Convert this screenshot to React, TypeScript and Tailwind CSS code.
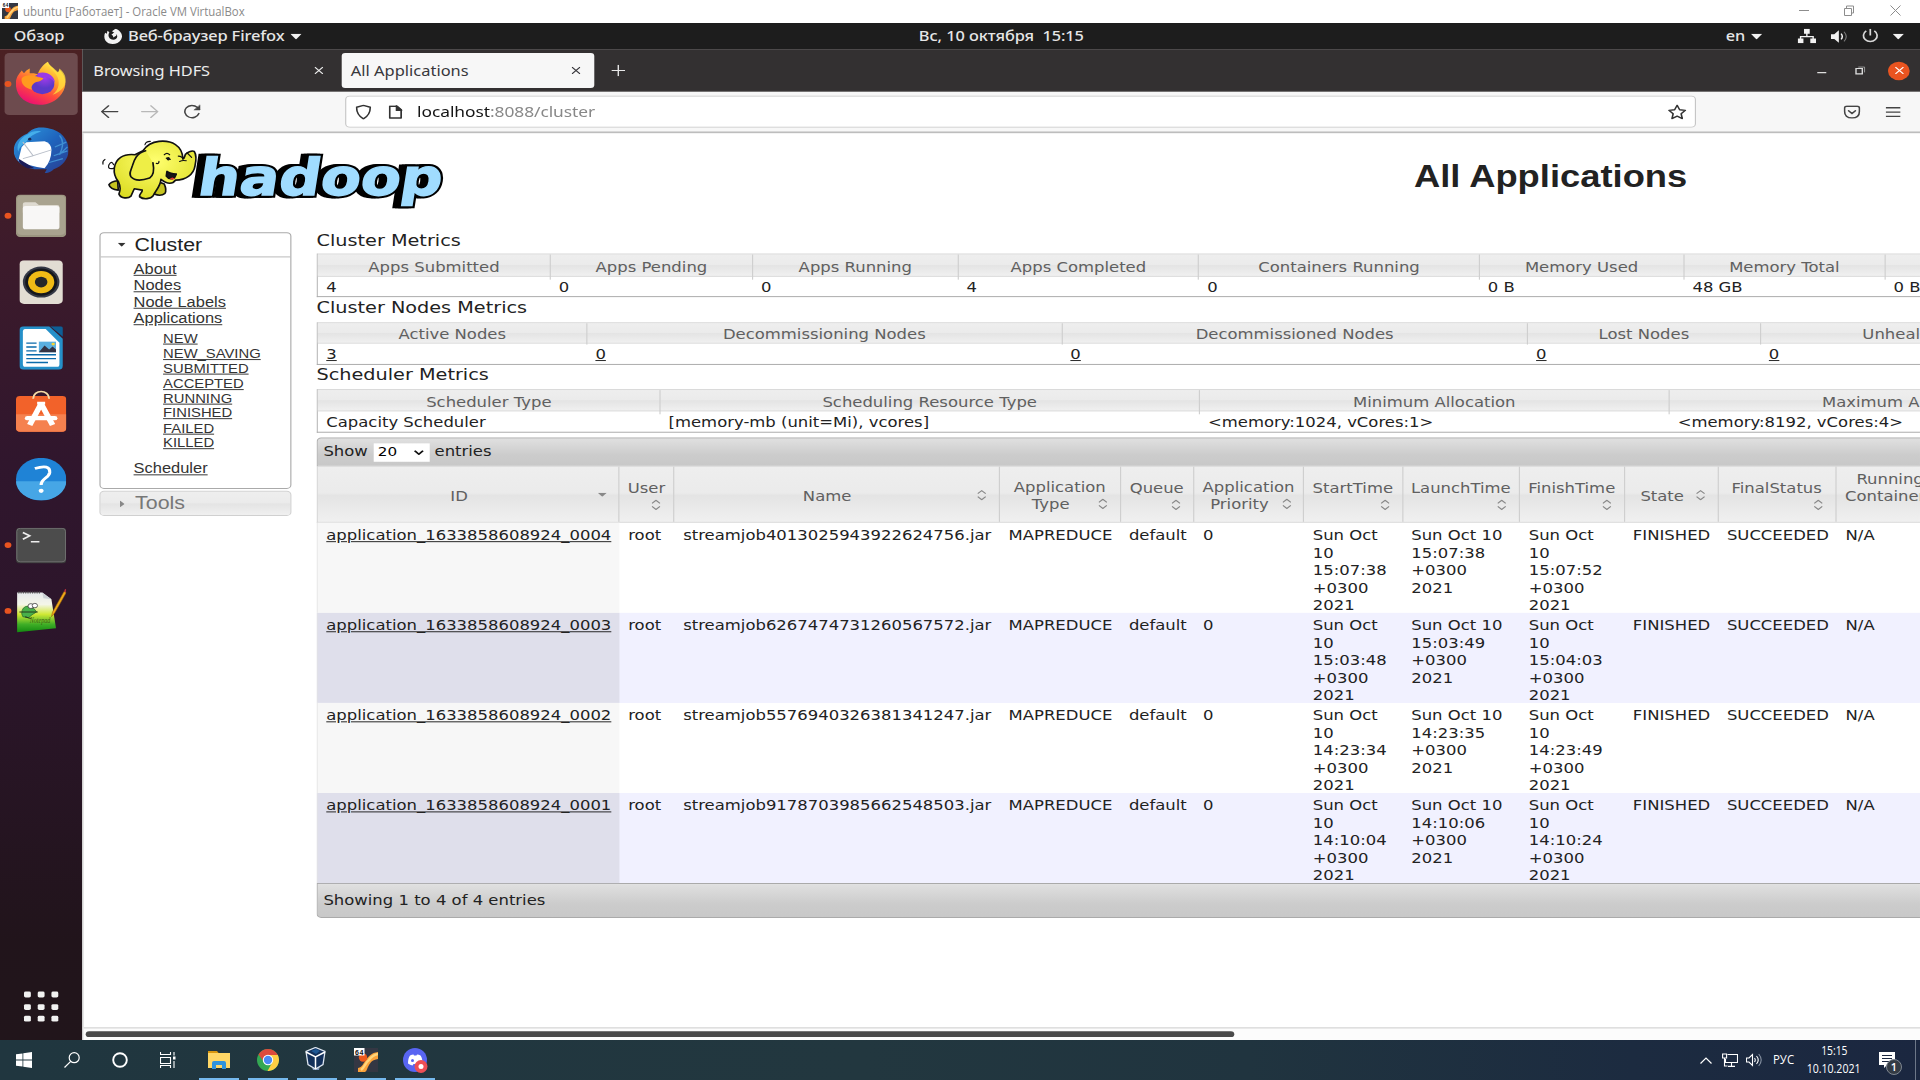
import React from "react";
import type { ReactNode } from "react";

const UI = "font-['Noto_Sans',sans-serif]";
const HEAD_BG = "bg-[linear-gradient(to_bottom,#eeeeee_0%,#ebebeb_48%,#e4e4e4_52%,#f0f0f0_100%)]";
const BAR_BG = "bg-[linear-gradient(to_bottom,#e0e0e0_0%,#cccccc_60%,#c8c8c8_100%)]";

/* ---------- host window ---------- */

function VBoxLogo({ className }: { className: string }) {
  return (
    <svg viewBox="0 0 24 24" className={className} preserveAspectRatio="none">
      <rect width="24" height="24" fill="#343743" />
      <path d="M4 24v-4c5-1 5-5 8-8 3-4 5-7 12-8v7c-6 1-7 3-9 6-2 3-2 6-4 7z" fill="#f9a13a" />
      <path d="M7 22c4-3 4-7 8-10 2-3 5-5 9-6" fill="none" stroke="#ffd57a" strokeWidth="2.500" />
      <circle cx="9" cy="9.500" r="4.200" fill="#ee5a1c" />
      <rect width="10.500" height="7.500" fill="#fff" />
      <text x="1" y="6.500" fontSize="7" fontWeight="700" fontFamily="Liberation Sans" fill="#111" textLength="8.500">64</text>
    </svg>
  );
}

function HostTitleBar() {
  return (
    <div className="flex h-[23px] items-start bg-white">
      <VBoxLogo className="ml-[2px] mt-[3px] h-4 w-4" />
      <span className="ml-[5px] mt-[3px] origin-left scale-x-[0.95] whitespace-nowrap font-['Open_Sans',sans-serif] text-[12px] leading-[18px] text-[#8a8a8a]">
        ubuntu [Работает] - Oracle VM VirtualBox
      </span>
      <svg className="ml-auto mr-[19px] mt-[5px] h-[11px] w-[102px]" viewBox="0 0 102 11" fill="none" stroke="#8d8d8d" strokeWidth="1">
        <path d="M0 5.500h10M45.500 3.500h7v7h-7zM47.500 3.500v-2.500h7v7h-2M91.500 .5l10 10M101.500 .5l-10 10" />
      </svg>
    </div>
  );
}

/* ---------- guest desktop ---------- */

function Caret() {
  return (
    <svg className="h-[6px] w-[10px]" viewBox="0 0 10 6"><path d="M0 0h10L5 6z" fill="#f2f2f2" /></svg>
  );
}

function TopBar() {
  return (
    <div className={`flex h-[27px] items-center bg-[#1d1d1d] text-[14.300px] font-medium leading-[27px] text-[#e6e6e6] ${UI}`}>
      <div className="ml-[12px] w-[79px] whitespace-nowrap text-[14.400px]">Обзор</div>
      <svg className="h-4 w-4" viewBox="0 0 16 16" fill="#f2f2f2">
        <path d="M1 4l1.500 1L3 2l1.700 1.500C3 7 4 11 8 11.300c3 0 4.500-3 3-5.500L8 7.500 6.500 6 9 4l-2-1.500L10 0c5 2 7 7 5 11-3 6-11 6-13.800 1C0 9.500 0 6.500 1 4z" />
        <path d="M8 4v5l3-2z" />
      </svg>
      <div className="ml-[5px] w-[142px] whitespace-nowrap text-[14.400px] tracking-[-0.100px]">Веб-браузер Firefox</div>
      <Caret />
      <div className="ml-[540px] w-[706px] whitespace-nowrap tracking-[-0.060px]">Вс, 10 октября&nbsp; 15:15</div>
      <div className="w-[22px]">en</div>
      <Caret />
      <svg className="ml-[31px] h-[15px] w-4" viewBox="0 0 16 15" fill="#f2f2f2">
        <path d="M5.500 0h5v5h-5zM0 10h5v5H0zM11 10h5v5h-5z" />
        <path d="M8 4v4M2.500 11V8h11v3" fill="none" stroke="#f2f2f2" strokeWidth="1.200" />
      </svg>
      <svg className="ml-[13px] h-[14px] w-[15px]" viewBox="0 0 15 14" fill="none" stroke="#f2f2f2">
        <path d="M0 4.500h3L7 .5v13L3 9.500H0z" fill="#f2f2f2" stroke="none" />
        <path d="M9 4q2 3 0 6" strokeWidth="1.300" /><path d="M11.500 2q4 5 0 10" stroke="#777" />
      </svg>
      <svg className="ml-[12px] h-[15px] w-[15px]" viewBox="0 0 15 15" fill="none" stroke="#d8d8d8" strokeWidth="1.500">
        <path d="M7.500 0v7M4 2.200a6 6 0 1 0 7 0" />
      </svg>
      <div className="ml-[12px]"><Caret /></div>
    </div>
  );
}

function FirefoxIcon() {
  return (
    <svg viewBox="0 0 48 48" className="h-12 w-12">
      <defs>
        <linearGradient id="fx" x1=".8" y1="0" x2=".25" y2="1"><stop offset="0" stopColor="#fff44f" /><stop offset=".35" stopColor="#ffa42c" /><stop offset=".65" stopColor="#ff4a3c" /><stop offset="1" stopColor="#e80a78" /></linearGradient>
        <radialGradient id="fp" cx=".6" cy=".2"><stop offset="0" stopColor="#a23bea" /><stop offset="1" stopColor="#5b39c9" /></radialGradient>
      </defs>
      <path d="M2 22c0-5 3-9 5-12l2 3c1-2 3-4 5-5v5c2 0 5 0 7 1 2-7 6-11 9-13 1 4 5 7 8 11 2-1 2-2 2-3 6 7 7 17 2 25-5 9-15 13-24 11C8 43 1 34 2 22z" fill="url(#fx)" />
      <circle cx="25" cy="24" r="10.500" fill="url(#fp)" />
      <path d="M7 18c4-5 10-3 16-1l3 1c-2 4-6 3-8 5-2 2-3 4-2 7-6-2-10-6-9-12z" fill="#ff9a1f" />
      <path d="M29 1c1 6 6 8 8 13 4 7 3 16-3 21 8-3 13-10 11-19-1-4-3-6-5-8l-1 4C36 8 31 5 29 1z" fill="#ffe03f" opacity=".75" />
      <path d="M21 13c7-3 15 2 15 10-2-5-8-8-15-6z" fill="#9b3ae6" />
    </svg>
  );
}

function ThunderbirdIcon() {
  return (
    <svg viewBox="0 0 48 48" className="h-12 w-12">
      <defs><linearGradient id="tb" x1="0" y1="0" x2="1" y2="1"><stop offset="0" stopColor="#2f9be0" /><stop offset=".5" stopColor="#1f64bd" /><stop offset="1" stopColor="#2a3b8f" /></linearGradient></defs>
      <path d="M12 7C15 3 20 0 26 1c3 0 4 1 5 1 10 2 17 11 17 22 0 10-6 17-13 20-3 4-8 4-8 4l2-4H18C7 42 0 34 0 25 0 17 4 11 12 7z" fill="url(#tb)" />
      <path d="M12 8c4-3 7-4 12-3-6 2-10 5-12 9-2 4-7 5-8 12-2-7 1-14 8-18z" fill="#45aeea" />
      <path d="M40 9c4 5 3 13 0 20l7-8M36 21l10-5M35 30l12-5M31 37l12-4" stroke="#3f8fd2" strokeWidth="1.200" fill="none" />
      <path d="M11 16l16-1q6 2 6 9 0 11-6 19Q13 41 4 35l3-14z" fill="#fff" />
      <path d="M8 16l9 14 16-6M17 30l-9 3" fill="none" stroke="#b9bfc9" strokeWidth="1" />
      <path d="M4 33l14 10h-6q-7-3-8-10z" fill="#1c1b58" /><circle cx="14" cy="13" r="1.400" fill="#1c2855" />
    </svg>
  );
}

function FilesIcon() {
  return (
    <svg viewBox="0 0 44 44" className="h-11 w-11">
      <rect width="44" height="44" rx="4" fill="#9b9580" /><rect x="1" y="1" width="42" height="41" rx="4" fill="#a9a38f" />
      <path d="M6 10q0-2 2-2h9l3 3h16q2 0 2 2v6H6z" fill="#dedad0" />
      <rect x="6" y="12" width="32" height="24" rx="2.500" fill="#f8f7f6" />
    </svg>
  );
}

function RhythmboxIcon() {
  return (
    <svg viewBox="0 0 38 45" className="h-[45px] w-[38px]">
      <rect width="38" height="45" rx="4" fill="#e2ddd3" /><circle cx="19" cy="22.500" r="16" fill="#343845" />
      <circle cx="19" cy="22.500" r="14" fill="#15171c" /><circle cx="19" cy="22.500" r="11.500" fill="#f0bb16" />
      <circle cx="19" cy="22.500" r="5.500" fill="#252729" />
    </svg>
  );
}

function WriterIcon() {
  return (
    <svg viewBox="0 0 38 45" className="h-[45px] w-[38px]">
      <path d="M4 0h22l12 13v28q0 4-4 4H4q-4 0-4-4V4q0-4 4-4z" fill="#2590c9" /><path d="M27 0h9q2 0 2 2v9z" fill="#0d5f96" />
      <path d="M5 3h18L35 17v22q0 3-2 3H5q-2 0-2-3V6q0-3 2-3z" fill="#fff" />
      <path d="M6 17.500h9M6 21.500h9M6 25.500h9M6 29.500h26M6 33.500h26M6 37.500h19" stroke="#0b6bab" strokeWidth="1.500" />
      <rect x="17" y="16" width="15" height="11" fill="#5aafe0" /><path d="M17 27l5-7 4 4 3-3 3 3v3z" fill="#334" /><circle cx="29.500" cy="18.500" r="1.500" fill="#f8d330" />
    </svg>
  );
}

function SoftwareIcon() {
  return (
    <svg viewBox="0 0 44 44" className="-mt-[4px] h-11 w-11">
      <rect y="6" width="44" height="37" rx="3.500" fill="#f2622a" /><path d="M0 25h44v14q0 4-4 4H4q-4 0-4-4z" fill="#f5814f" />
      <path d="M15 9C15-1 29-1 29 9" fill="none" stroke="#f6dba6" strokeWidth="1.700" />
      <path d="M22 14L12 36M22 14l10 22" stroke="#fff" strokeWidth="5" fill="none" /><path d="M18.500 12h7v3h-7z" fill="#fff" /><path d="M10 29h24" stroke="#fff" strokeWidth="4.500" strokeLinecap="round" />
    </svg>
  );
}

function HelpIcon() {
  return (
    <svg viewBox="0 0 44 44" className="h-11 w-11">
      <circle cx="22" cy="22" r="22" fill="#1f83d6" /><path d="M0 24a22 20 0 0 0 44 0z" fill="#46a6e6" />
      <path d="M16.500 11Q30 6 29.500 15c-.5 6-7.500 6-7.500 13" fill="none" stroke="#fff" strokeWidth="2.800" /><circle cx="22" cy="34" r="2.200" fill="#fff" />
    </svg>
  );
}

function TerminalIcon() {
  return (
    <svg viewBox="0 0 44 37" className="h-[37px] w-11">
      <rect width="44" height="37" rx="3.500" fill="#3a3a3a" /><rect x=".7" y=".7" width="42.600" height="34.600" rx="3" fill="#4c4c4c" stroke="#777" strokeWidth=".8" />
      <path d="M6 5l6 3.500L6 12M13 14.500h7.500" fill="none" stroke="#eee" strokeWidth="1.600" />
    </svg>
  );
}

function NotepadqqIcon() {
  return (
    <svg viewBox="0 0 44 46" className="h-[46px] w-11">
      <defs><linearGradient id="np" x1="0" y1="0" x2="0" y2="1"><stop offset="0" stopColor="#e6e9ec" /><stop offset=".3" stopColor="#f4f6e8" /><stop offset=".55" stopColor="#cfe834" /><stop offset=".8" stopColor="#3fae27" /><stop offset="1" stopColor="#128a10" /></linearGradient></defs>
      <path d="M1 4h22l8 7 4 30L1 45z" fill="url(#np)" /><path d="M2 4h20" stroke="#555" strokeDasharray="1 1" strokeWidth="2" />
      <path d="M23 4l1 6 7 1z" fill="#cbd0d4" />
      <path d="M5 26q0-8 6-8l5 3 2 3-4 3-3 3-5-1z" fill="#48b04a" stroke="#256b27" strokeWidth=".7" /><circle cx="13" cy="18" r="2.500" fill="#fff" stroke="#333" strokeWidth=".7" /><circle cx="16.500" cy="17.500" r="2.300" fill="#fff" stroke="#333" strokeWidth=".7" />
      <path d="M3 24h16M8 29l5 2" stroke="#263a1c" strokeWidth="1" />
      <text x="12" y="35" fontSize="9" fontStyle="italic" fontFamily="Liberation Serif" fill="#3c6212" textLength="18" lengthAdjust="spacingAndGlyphs">Notepad</text>
      <path d="M31 29l1-5L42 3l2 1-10 21z" fill="#f0a818" stroke="#8b5a10" strokeWidth=".5" /><path d="M42 3l1-3 1 1-.5 3z" fill="#b3303c" />
    </svg>
  );
}

const DOCK: { icon: ReactNode; running?: boolean; active?: boolean }[] = [
  { icon: <FirefoxIcon />, running: true, active: true },
  { icon: <ThunderbirdIcon /> },
  { icon: <FilesIcon />, running: true },
  { icon: <RhythmboxIcon /> },
  { icon: <WriterIcon /> },
  { icon: <SoftwareIcon /> },
  { icon: <HelpIcon /> },
  { icon: <TerminalIcon />, running: true },
  { icon: <NotepadqqIcon />, running: true },
];

function Dock() {
  return (
    <div className="flex w-[72px] shrink-0 flex-col bg-[linear-gradient(to_bottom,#4b2123_0%,#3d1b2b_20%,#30162d_42%,#2b152a_62%,#21141b_90%,#21151b_100%)] pt-[2px]">
      {DOCK.map((d, i) => (
        <div key={i} className="flex h-[68px] items-center">
          <div className={`ml-[4px] flex h-16 w-16 items-center rounded ${d.active ? "bg-[#6d4b4e]" : ""}`}>
            <div className={`h-[6px] w-[6px] rounded-full ${d.running ? "bg-[#e95420]" : ""}`} />
            <div className="flex w-[52px] items-center justify-center">{d.icon}</div>
          </div>
        </div>
      ))}
      <div className="mb-[19px] ml-[20.500px] mt-auto grid w-[31px] grid-cols-3 gap-x-[6px] gap-y-[6.500px]">
        {Array.from({ length: 9 }, (_, i) => <div key={i} className="h-[6px] w-[6px] rounded-[1.500px] bg-[#f2f2f2]" />)}
      </div>
    </div>
  );
}

/* ---------- browser chrome ---------- */

function Cross({ className }: { className: string }) {
  return <svg viewBox="0 0 8 8" className={className} fill="none" stroke="currentColor" strokeWidth="1.100"><path d="M.5 .5l7 7M7.500 .5l-7 7" /></svg>;
}

function TabStrip() {
  return (
    <div className={`flex h-11 items-center border-b border-[#4a4848] bg-[#333031] text-[14.300px] text-[#ececec] ${UI}`}>
      <div className="ml-[9.700px] w-[193px] whitespace-nowrap pt-[2px] tracking-[-0.050px]">Browsing HDFS</div>
      <Cross className="h-2 w-2" />
      <div className="ml-[16.300px] flex h-9 w-[221px] items-center rounded-[3px] bg-[#f7f7f7] text-[#38373c]">
        <div className="ml-[8px] w-[193px] whitespace-nowrap pt-[2px] text-[14.400px]">All Applications</div>
        <Cross className="h-2 w-2" />
      </div>
      <svg className="ml-[15.500px] mt-px h-3 w-3" viewBox="0 0 12 12" stroke="#e8e8e8" strokeWidth="1.200"><path d="M6 0v12M0 6h12" /></svg>
      <svg className="ml-auto mt-px h-3 w-[43px]" viewBox="0 0 43 12" fill="none" stroke="#dedede" strokeWidth="1.200">
        <path d="M0 8.200h8M34 4h5.500v5.500H34z" /><path d="M36 2.500h5.500V8" stroke="#aaa" strokeWidth=".8" />
      </svg>
      <div className="ml-[19.500px] mr-[9px] mt-px flex h-[19px] w-[19px] items-center justify-center rounded-full bg-[#e95420] text-white">
        <Cross className="h-2 w-2" />
      </div>
    </div>
  );
}

function Toolbar() {
  return (
    <div className={`flex h-[43px] items-center border-b-2 border-[#bdbdbd] bg-[#f7f7f7] ${UI}`}>
      <svg className="ml-[15.700px] h-[15px] w-[88px]" viewBox="0 0 88 15" fill="none" stroke="#444" strokeWidth="1.300" strokeLinecap="round" strokeLinejoin="round">
        <path d="M1 7.500h14M7 1.500l-6 6 6 6" /><path d="M36 7.500h14M44 1.500l6 6-6 6" stroke="#b8b8b8" />
        <path d="M86 9.500a6.300 6.300 0 1 1-1.500-6.500l2 2" strokeWidth="1.400" /><path d="M87 .8v5h-5z" fill="#444" strokeWidth=".5" />
      </svg>
      <div className="ml-[126.800px] flex h-[33px] w-[1182px] items-center rounded border border-[#c6c6c6] bg-white">
        <svg className="ml-[8px] h-4 w-[14px]" viewBox="0 0 14 16" fill="none" stroke="#333" strokeWidth="1.400"><path d="M7 1l6 2q0 8-6 12-6-4-6-12z" strokeLinejoin="round" /></svg>
        <svg className="ml-[15px] h-[14px] w-[12px]" viewBox="0 0 12 14" fill="none" stroke="#333" strokeWidth="1.500"><path d="M1 1h6l4 4v8H1z" strokeLinejoin="round" /><path d="M7 .5V5h4.500z" fill="#333" /></svg>
        <div className="ml-[12.500px] whitespace-nowrap text-[15.200px] tracking-[-0.050px] text-[#888]"><span className="text-[#151515]">localhost</span>:8088/cluster</div>
        <svg className="ml-auto mr-[7px] h-4 w-[17px]" viewBox="0 0 17 16" fill="none" stroke="#333" strokeWidth="1.400" strokeLinejoin="round"><path d="M8.500 1l2.200 4.600 5 .6-3.700 3.500 1 5-4.500-2.500L4 14.700l1-5L1.300 6.200l5-.6z" /></svg>
      </div>
      <svg className="ml-auto h-[14px] w-[15px]" viewBox="0 0 15 14" fill="none" stroke="#444" strokeWidth="1.400" strokeLinecap="round"><path d="M1 3q0-2 2-2h9q2 0 2 2v3q0 7-6.500 7T1 6z" /><path d="M4.500 5.500l3 3 3-3" /></svg>
      <svg className="ml-[22px] mr-[17.500px] h-[12px] w-[13px]" viewBox="0 0 13 12" stroke="#444" strokeWidth="1.300"><path d="M0 1.500h13M0 6h13M0 10.500h13" /></svg>
    </div>
  );
}

/* ---------- page ---------- */

function HadoopLogo() {
  return (
    <svg viewBox="0 0 1080 240" preserveAspectRatio="none" className="h-[82.600px] w-[315px] shrink-0">
      <defs><radialGradient id="el" cx=".5" cy=".35" r=".7"><stop offset="0" stopColor="#ffff70" /><stop offset="1" stopColor="#dcdc22" /></radialGradient></defs>
      <g transform="translate(0 184) skewX(-9)" fontFamily="DejaVu Sans, sans-serif" fontWeight="700" fontSize="152" strokeLinejoin="miter">
        <text x="300" y="0" textLength="732" lengthAdjust="spacingAndGlyphs" fill="#000" stroke="#000" strokeWidth="16">hadoop</text>
        <text x="308" y="0" textLength="732" lengthAdjust="spacingAndGlyphs" fill="#000" stroke="#000" strokeWidth="16">hadoop</text>
        <text x="318" y="0" textLength="732" lengthAdjust="spacingAndGlyphs" fill="#000" stroke="#000" strokeWidth="16">hadoop</text>
        <text x="318" y="0" textLength="732" lengthAdjust="spacingAndGlyphs" fill="#a0dcff" stroke="#a0dcff" strokeWidth="4">hadoop</text>
      </g>
      <g stroke="#111" strokeWidth="5" strokeLinejoin="round" strokeLinecap="round">
        <path d="M72 104q-22 6-16-10 8-14 14 0M38 92q-2-10 6-14M164 34q2-10 16-10" fill="none" strokeWidth="3.500" />
        <path d="M82 142q-20 2-26 12 4 14 28 16zM196 142l26 10q8 18 2 28-12 10-32 2z" fill="#c6c420" />
        <path d="M134 64C98 60 76 76 72 104c-2 18 2 28 12 40 8 18 6 26 2 38 6 14 28 14 36 6l10-22 24 4c0 10-10 10-8 20 12 10 34 6 40-2 10-20 22-28 24-50 20 16 36 14 44 2 32 0 54-18 58-42 4-18 6-32-2-44-8-4-18 2-26 8-4 6-2 14-8 14C276 36 244 20 206 24c-20 2-36 10-48 28z" fill="url(#el)" />
        <path d="M166 52c-28 8-34 26-40 46-6 18-10 22-4 32 12 14 38 10 56 4 12-8 14-26 10-46" fill="#eeee46" />
        <path d="M228 128q8 12 24 6l6-12q-18 0-28-8z" fill="#161616" /><path d="M238 136l8-4 8 3-8 5z" fill="#d33" stroke="none" />
        <path d="M222 64q8-8 16 0M228 74l12 4M264 68q12 0 14 10M268 84q8-4 20-2M198 90q8 2 8-6M290 58l14 14" fill="none" strokeWidth="3.500" /><ellipse cx="234" cy="76" rx="5" ry="5" fill="#111" stroke="none" />
      </g>
    </svg>
  );
}

const STATES = ["NEW", "NEW_SAVING", "SUBMITTED", "ACCEPTED", "RUNNING", "FINISHED", "FAILED", "KILLED"];

function Nav() {
  return (
    <div className="mt-[2.200px] w-[168px] shrink-0 font-['Liberation_Sans',sans-serif] text-[#333]">
      <div className="h-[265px] rounded border border-[#aaa] bg-white">
        <div className="flex h-[25.500px] items-center border-b border-[#b8b8b8] text-[18.700px] text-[#212121]">
          <svg className="ml-[15px] mr-[8px] h-[4px] w-[7px]" viewBox="0 0 7 4"><path d="M0 0h7L3.500 4z" fill="#333" /></svg>
          <span>Cluster</span>
        </div>
        <div className="ml-[29.200px] mt-[3.700px] text-[14.400px] leading-[17.200px] underline">
          {["About", "Nodes", "Node Labels", "Applications"].map((t) => <div key={t}>{t}</div>)}
        </div>
        <div className="ml-[55px] mt-[3.500px] text-[12.960px] leading-[15.450px] underline">
          {STATES.map((t) => <div key={t}>{t}</div>)}
        </div>
        <div className="ml-[29.200px] mt-[10.200px] text-[14.400px] leading-[17.100px] underline">Scheduler</div>
      </div>
      <div className={`mt-[2.500px] flex h-[26px] items-center rounded border border-[#d0d0d0] text-[18.700px] text-[#777] ${HEAD_BG}`}>
        <svg className="ml-[17px] mr-[9.500px] h-[7px] w-[4px]" viewBox="0 0 4 7"><path d="M0 0v7l4-3.500z" fill="#888" /></svg>
        <span>Tools</span>
      </div>
    </div>
  );
}

function Metrics({ title, titleHeight, cols, heads, values, links, headRow, valueRow }: {
  title: string; titleHeight: string; cols: string; heads: string[]; values: string[]; links?: boolean; headRow: string; valueRow: string;
}) {
  return (
    <section>
      <h3 className={`-ml-[0.500px] whitespace-nowrap text-[16.840px] leading-[20px] ${titleHeight}`}>{title}</h3>
      <div className="w-[1600px] border-b border-l border-[#aaa]">
        <div className={`grid border-b border-t border-[#d6d6d6] text-center text-[#606060] ${HEAD_BG} ${cols} ${headRow}`}>
          {heads.map((h) => <div key={h} className="whitespace-nowrap border-r border-[#cfcfcf]">{h}</div>)}
        </div>
        <div className={`grid ${cols} ${valueRow} ${links ? "underline" : ""}`}>
          {values.map((v, i) => <div key={i} className="whitespace-nowrap pl-[7px]">{v}</div>)}
        </div>
      </div>
    </section>
  );
}

function SortIcon({ className = "" }: { className?: string }) {
  return (
    <svg className={`h-[11px] w-[8px] shrink-0 ${className}`} viewBox="0 0 8 11" fill="none" stroke="#888" strokeWidth="1.100"><path d="M.5 4L4 .8 7.500 4M.5 7L4 10.200 7.500 7" /></svg>
  );
}

const APP_COLS = "grid-cols-[264px_48px_285px_105.300px_64.400px_96.300px_86.200px_102.800px_91.300px_81.800px_103.800px_120px]";

function Th({ children }: { children: ReactNode }) {
  return <div className="h-full border-r border-[#cfcfcf]">{children}</div>;
}

/* Label over its sort arrows, arrows at the right edge. */
function StackedHead({ label }: { label: string }) {
  return (
    <Th>
      <div className="flex h-full flex-col items-center pt-[12.300px] leading-[18px]">
        <span className="-ml-[0.700px]">{label}</span>
        <SortIcon className="mr-[11px] mt-[3.300px] self-end" />
      </div>
    </Th>
  );
}

function TwoLineHead({ top, bottom }: { top: string; bottom: string }) {
  return (
    <Th>
      <div className="flex h-full flex-col items-center pt-[12px] leading-[18px]">
        <span className="-ml-[0.700px]">{top}</span>
        <div className="flex w-full items-center pl-[2px] pr-[10.500px]"><span className="flex-1 text-center">{bottom}</span><SortIcon className="mb-[2px]" /></div>
      </div>
    </Th>
  );
}

type AppRow = { id: string; job: string; start: string; launch: string; finish: string };
const APPS: AppRow[] = [
  { id: "0004", job: "4013025943922624756", start: "15:07:38", launch: "15:07:38", finish: "15:07:52" },
  { id: "0003", job: "6267474731260567572", start: "15:03:48", launch: "15:03:49", finish: "15:04:03" },
  { id: "0002", job: "5576940326381341247", start: "14:23:34", launch: "14:23:35", finish: "14:23:49" },
  { id: "0001", job: "9178703985662548503", start: "14:10:04", launch: "14:10:06", finish: "14:10:24" },
];

function Stamp({ lines }: { lines: string[] }) {
  return <div className="pl-[7.200px]">{lines.map((l) => <div key={l}>{l}</div>)}</div>;
}

function AppsTable() {
  return (
    <section className="mt-[5.800px] w-[1600px]">
      <div className={`flex h-[30px] items-center rounded-tl border border-[#aaa] pl-[4.500px] ${BAR_BG}`}>
        <span>Show</span>
        <div className="mx-[4.700px] flex h-[19px] w-[49px] items-center bg-white pl-[4px] pr-[5px] text-[13.300px] text-black">
          <span className="flex-1">20</span>
          <svg className="h-[5px] w-[9px]" viewBox="0 0 9 5" fill="none" stroke="#111" strokeWidth="1.600"><path d="M.8 .5l3.700 3.700L8.200 .5" /></svg>
        </div>
        <span>entries</span>
      </div>
      <div className={`grid h-[58px] border-b border-l border-[#cfcfcf] text-[#606060] ${APP_COLS} ${HEAD_BG}`}>
        <Th>
          <div className="flex h-full items-center pl-[2px] pr-[10.500px]"><span className="flex-1 pt-[4.500px] text-center">ID</span>
            <svg className="mt-px h-[4px] w-[8px]" viewBox="0 0 8 4"><path d="M0 0h8L4 4z" fill="#888" /></svg></div>
        </Th>
        <StackedHead label="User" />
        <Th><div className="flex h-full items-center pl-[2px] pr-[11.500px]"><span className="flex-1 pt-[4.500px] text-center">Name</span><SortIcon className="mt-px" /></div></Th>
        <TwoLineHead top="Application" bottom="Type" />
        <StackedHead label="Queue" />
        <TwoLineHead top="Application" bottom="Priority" />
        <StackedHead label="StartTime" />
        <StackedHead label="LaunchTime" />
        <StackedHead label="FinishTime" />
        <Th><div className="flex h-full items-center pl-[3px] pr-[10.500px]"><span className="flex-1 pt-[4.500px] text-center">State</span><SortIcon className="mt-px" /></div></Th>
        <StackedHead label="FinalStatus" />
        <div className="pt-[4px] leading-[18px]"><div className="pl-[17px]">Running</div><div className="pl-[7px]">Containers</div></div>
      </div>
      {APPS.map((a, i) => (
        <div key={a.id} className={`grid h-[93px] grid-rows-[93px] border-l border-[#ddd] leading-[18.070px] ${APP_COLS} ${i % 2 ? "bg-[#f1f1ff]" : "bg-white"} [&>div]:pt-[3.300px]`}>
          <div className={`pl-[7px] underline ${i % 2 ? "bg-[#dfdfeb]" : "bg-[#f7f7f7]"}`}>application_1633858608924_{a.id}</div>
          <div className="pl-[7.200px]">root</div>
          <div className="pl-[7.300px]">streamjob{a.job}.jar</div>
          <div className="pl-[7px]">MAPREDUCE</div>
          <div className="pl-[7px]">default</div>
          <div className="pl-[7.500px]">0</div>
          <Stamp lines={["Sun Oct", "10", a.start, "+0300", "2021"]} />
          <Stamp lines={["Sun Oct 10", a.launch, "+0300", "2021"]} />
          <Stamp lines={["Sun Oct", "10", a.finish, "+0300", "2021"]} />
          <div className="pl-[7px]">FINISHED</div>
          <div className="pl-[7.500px]">SUCCEEDED</div>
          <div className="pl-[7.500px]">N/A</div>
        </div>
      ))}
      <div className={`h-[35.500px] rounded-bl border border-[#aaa] pl-[4.500px] leading-[34px] ${BAR_BG}`}>Showing 1 to 4 of 4 entries</div>
    </section>
  );
}

function Page() {
  return (
    <div className="flex min-h-0 flex-1 flex-col overflow-hidden border-l border-[#c8c8c8] bg-white">
      <header className="flex h-[99.500px] shrink-0 items-start pl-[5.750px]">
        <HadoopLogo />
        <h1 className="ml-[843.500px] mt-[26.300px] whitespace-nowrap font-['Liberation_Sans',sans-serif] text-[31.800px] font-bold leading-[37px] text-[#222]">All Applications</h1>
      </header>
      <div className="flex min-h-0 flex-1 overflow-hidden pl-[13.700px]">
        <Nav />
        <main className="ml-[22.300px] min-w-0 flex-1 overflow-hidden whitespace-nowrap pl-[0.500px] font-['DejaVu_Sans',sans-serif] text-[14.400px] text-[#222]">
          <Metrics title="Cluster Metrics" titleHeight="h-[24.500px]"
            cols="grid-cols-[203.500px_177px_179.800px_210.600px_245.500px_179px_176px_200px]" headRow="h-[23.500px] leading-[26px]" valueRow="h-[20px] leading-[23px]"
            heads={["Apps Submitted", "Apps Pending", "Apps Running", "Apps Completed", "Containers Running", "Memory Used", "Memory Total", "Memory Reserved"]}
            values={["4", "0", "0", "4", "0", "0 B", "48 GB", "0 B"]} />
          <Metrics title="Cluster Nodes Metrics" titleHeight="h-[26px]"
            cols="grid-cols-[235.500px_415.600px_407.500px_203.700px_302px]" headRow="h-[22.500px] leading-[22.700px]" valueRow="h-[20.500px] leading-[23.500px]" links
            heads={["Active Nodes", "Decommissioning Nodes", "Decommissioned Nodes", "Lost Nodes", "Unhealthy Nodes"]}
            values={["3", "0", "0", "0", "0"]} />
          <Metrics title="Scheduler Metrics" titleHeight="h-[25.500px]"
            cols="grid-cols-[299.500px_472px_411px_414px]" headRow="h-[23px] leading-[24.500px]" valueRow="h-[20.500px] leading-[23.500px]"
            heads={["Scheduler Type", "Scheduling Resource Type", "Minimum Allocation", "Maximum Allocation"]}
            values={["Capacity Scheduler", "[memory-mb (unit=Mi), vcores]", "<memory:1024, vCores:1>", "<memory:8192, vCores:4>"]} />
          <AppsTable />
        </main>
      </div>
      <div className="h-[13.500px] shrink-0 border-t border-[#cbcbcb] bg-[#fcfcfc] pl-[2px] pt-[3.500px]">
        <div className="h-[6px] w-[1005px] rounded-full bg-[#4a4a4a]" />
      </div>
    </div>
  );
}

/* ---------- host taskbar ---------- */

function Taskbar() {
  const app = "flex h-10 w-10 items-center justify-center border-b-2 border-[#76b9ed]";
  return (
    <div className="flex h-10 items-center bg-[linear-gradient(to_right,#20363f_0%,#22373f_45%,#20343f_65%,#1c2b40_85%,#1b2740_100%)] text-white">
      <svg className="ml-4 h-4 w-4" viewBox="0 0 16 16" fill="#fff"><path d="M0 2.300L6.500 1.400V7.600H0zM7.300 1.300L16 0v7.600H7.300zM0 8.400h6.500v6.200L0 13.700zM7.300 8.400H16V16l-8.700-1.300z" /></svg>
      <svg className="ml-8 h-4 w-4" viewBox="0 0 16 16" fill="none" stroke="#fff" strokeWidth="1.200"><circle cx="10.200" cy="5.700" r="5" /><path d="M6.700 9.300L.5 15.500" /></svg>
      <svg className="ml-8 h-4 w-4" viewBox="0 0 16 16" fill="none" stroke="#fff" strokeWidth="1.900"><circle cx="8" cy="8" r="6.800" /></svg>
      <svg className="ml-8 h-4 w-4" viewBox="0 0 16 16" fill="none" stroke="#fff"><path d="M.5 0v2.500h10V0M.5 5.500h10v6H.5zM.5 16v-2.500h10V16M14 0v3.500M14 9v7" strokeWidth="1.100" /><rect x="13" y="4.500" width="2.500" height="3" fill="#fff" stroke="none" /></svg>
      <div className={`ml-[23px] ${app}`}>
        <svg className="mt-px h-[18px] w-[22px]" viewBox="0 0 22 18"><path d="M0 0h9l2 2.500H0z" fill="#d9970f" /><path d="M0 2h22v15H0z" fill="#ffd766" /><path d="M4 18v-6q0-2 2-2h10q2 0 2 2v6h-4v-4H8v4z" fill="#2f93dd" /></svg>
      </div>
      <div className={`ml-[9px] ${app}`}>
        <svg className="mt-[2px] h-[22px] w-[22px]" viewBox="0 0 22 22">
          <circle cx="11" cy="11" r="11" fill="#34a853" /><path d="M1.500 5.500A11 11 0 0 1 20.500 5.500L20.700 6H11L7 13z" fill="#dc4a3d" />
          <path d="M11 6h9.800A11 11 0 0 1 10.500 22L15.500 13z" fill="#ffce44" /><circle cx="11" cy="11" r="5.200" fill="#fff" /><circle cx="11" cy="11" r="4.200" fill="#4a8af4" />
        </svg>
      </div>
      <div className={`ml-[9px] ${app}`}>
        <svg className="mr-[4px] h-6 w-[21px]" viewBox="0 0 21 24"><path d="M6 18h9l-1 5H8z" fill="#8299bb" /><path d="M10.500 .5l9.500 4-2 13-7.500 4.500L3 17.500 1 4.500z" fill="#12305b" stroke="#dce5f0" strokeWidth="1.300" /><path d="M1 5l9.500 5L20 5M10.500 10v12" fill="none" stroke="#fff" strokeWidth="1.500" /><path d="M6 4l5-2 4 2-4 3z" fill="#1f5894" /></svg>
      </div>
      <div className={`ml-[9px] ${app}`}><VBoxLogo className="mr-px mt-[2px] h-6 w-6" /></div>
      <div className={`ml-[9px] ${app}`}>
        <svg className="mt-[2px] h-[25px] w-[25px]" viewBox="0 0 25 25"><circle cx="12" cy="12" r="12" fill="#5865f2" /><path d="M5 15.500Q5 10 7 7.500q2-1 3.500-1l.5 1h2.500l.5-1q2 0 3.500 1 2 2.500 2 8-2 1.500-4 2l-1-1.500h-4l-1 1.500Q7 17 5 15.500z" fill="#fff" /><circle cx="9.500" cy="12.500" r="1.500" fill="#5865f2" /><circle cx="18" cy="18.500" r="6.500" fill="#ed4f55" /><circle cx="18" cy="18.500" r="2.500" fill="#fff" /></svg>
      </div>
      <div className="ml-auto flex h-full items-center font-['Open_Sans',sans-serif] text-[12px]">
        <svg className="h-[7px] w-3" viewBox="0 0 12 7" fill="none" stroke="#fff" strokeWidth="1.200"><path d="M.5 6.500L6 1l5.500 5.500" /></svg>
        <svg className="ml-[10px] h-[14px] w-4" viewBox="0 0 16 14" fill="none" stroke="#fff" strokeWidth="1.100"><path d="M5.500 1.500h10v8H3.500V6M9.500 9.500V13M6 13.400h7" /><path d="M.6 1h4v4h-4zM2.500 5v8h3" /></svg>
        <svg className="ml-[8px] h-[14px] w-[16px]" viewBox="0 0 16 14" fill="none" stroke="#fff" strokeWidth="1.100"><path d="M.5 5h2.500L6.500 1.500v11L3 9H.5zM8.500 5q1.500 2 0 4M10.500 3q3.500 4 0 8" /><path d="M12.700 1q5 6 0 12" stroke="#8590a0" /></svg>
        <span className="ml-[11px] w-[24px] origin-left scale-x-[0.950]">РУС</span>
        <div className="ml-[7px] flex w-[60px] flex-col items-center whitespace-nowrap leading-[18px]">
          <span className="scale-x-[0.860]">15:15</span><span className="scale-x-[0.880]">10.10.2021</span>
        </div>
        <svg className="ml-[14px] mt-[6px] h-6 w-[24px]" viewBox="0 0 24 24"><path d="M1 1h16v13H9l-3 3v-3H1z" fill="#fff" /><path d="M4 4.500h10M4 7.500h10M4 10.500h7" stroke="#1b2740" strokeWidth="1.200" /><circle cx="16" cy="16" r="7.500" fill="#343b44" stroke="#7f8791" /><text x="16" y="20" textAnchor="middle" fontSize="11" fontFamily="Open Sans" fontWeight="600" fill="#fff">1</text></svg>
        <div className="ml-[13px] mr-[4px] h-full w-px bg-[#6d7788]" />
      </div>
    </div>
  );
}

export default function App() {
  return (
    <div className="flex h-[1080px] w-[1920px] flex-col overflow-hidden bg-white">
      <HostTitleBar />
      <div className="h-[1017px] overflow-hidden">
        <div className="flex h-[1050px] w-[1680px] origin-top-left scale-x-[1.142857] scale-y-[0.968571] flex-col">
          <TopBar />
          <div className="flex min-h-0 flex-1">
            <Dock />
            <div className="flex min-w-0 flex-1 flex-col">
              <TabStrip />
              <Toolbar />
              <Page />
            </div>
          </div>
        </div>
      </div>
      <Taskbar />
    </div>
  );
}
